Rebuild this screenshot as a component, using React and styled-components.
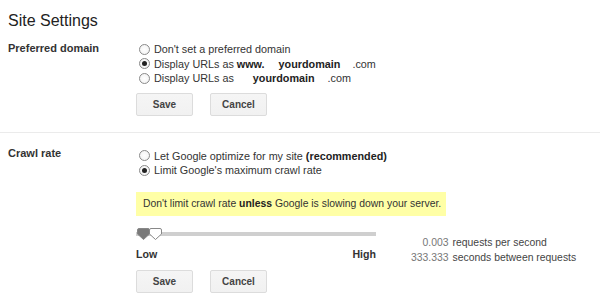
import React from 'react';
import styled, { createGlobalStyle } from 'styled-components';

const GlobalStyle = createGlobalStyle`
  html, body {
    margin: 0;
    padding: 0;
    background: #fff;
  }
  body {
    font-family: "Liberation Sans", Arial, sans-serif;
    color: #222;
  }
`;

const Page = styled.div`
  width: 600px;
  height: 304px;
  overflow: hidden;
  padding-top: 10px;
  box-sizing: border-box;
`;

const Title = styled.h1`
  margin: 0 0 0 8px;
  font-size: 16px;
  font-weight: normal;
  line-height: 22px;
  color: #222;
`;

const Section = styled.div`
  display: grid;
  grid-template-columns: 128px 1fr;
  padding: ${p => p.$pad || '9px 0 16px 8px'};
  border-bottom: ${p => (p.$divider ? '1px solid #ebebeb' : 'none')};
`;

const Label = styled.div`
  font-size: 11px;
  font-weight: bold;
  color: #333;
  line-height: 14px;
`;

const Options = styled.div`
  display: flex;
  flex-direction: column;
  padding-top: ${p => p.$top || 0}px;
`;

const Option = styled.label`
  display: flex;
  align-items: center;
  gap: 4px;
  font-size: 10.8px;
  line-height: 14.5px;
  color: #333;
  padding-left: 3px;
  white-space: nowrap;
`;

const Radio = styled.span`
  width: 11px;
  height: 11px;
  box-sizing: border-box;
  border-radius: 50%;
  border: 1px solid #8a8a8a;
  background: radial-gradient(circle, #fff 0, #f0f0f0 100%);
  display: inline-flex;
  align-items: center;
  justify-content: center;
  flex-shrink: 0;

  &::after {
    content: '';
    width: 5px;
    height: 5px;
    border-radius: 50%;
    background: ${p => (p.$checked ? '#222' : 'transparent')};
  }
`;

const Strong = styled.b`
  font-weight: bold;
  color: #222;
  margin-left: ${p => p.$ml || 0}px;
`;

const Plain = styled.span`
  margin-left: ${p => p.$ml || 0}px;
`;

const Buttons = styled.div`
  display: flex;
  gap: 17px;
  margin-top: ${p => p.$mt || 9}px;
`;

const Button = styled.button`
  width: 57px;
  height: 23px;
  border: 1px solid #dcdcdc;
  border-radius: 2px;
  background: linear-gradient(#f5f5f5, #f1f1f1);
  font-family: "Liberation Sans", Arial, sans-serif;
  font-size: 10px;
  font-weight: bold;
  color: #444;
  padding: 0;
`;

const Note = styled.div`
  width: 310px;
  height: 24px;
  line-height: 24px;
  box-sizing: border-box;
  margin-top: 14px;
  background: #ffffa6;
  font-size: 10.4px;
  color: #333;
  padding-left: 7px;
  white-space: nowrap;
`;

const SliderRow = styled.div`
  display: flex;
  align-items: flex-end;
  margin-top: 10px;
`;

const SliderCol = styled.div`
  width: 240px;
  display: flex;
  flex-direction: column;
`;

const Track = styled.div`
  position: relative;
  height: 16px;

  &::before {
    content: '';
    position: absolute;
    left: 0;
    right: 0;
    top: 6px;
    height: 4px;
    background: #cfcfcf;
  }
`;

const Thumb = styled.svg`
  position: absolute;
  top: 1px;
  left: ${p => p.$left}px;
`;

const Ends = styled.div`
  display: flex;
  justify-content: space-between;
  font-size: 10.6px;
  font-weight: bold;
  color: #333;
  margin-top: 5px;
  line-height: 14px;
`;

const Rates = styled.div`
  margin-left: 35px;
  margin-bottom: -4px;
  display: grid;
  grid-template-columns: auto auto;
  column-gap: 4px;
  font-size: 10.4px;
  line-height: 15px;
  color: #444;
`;

const Num = styled.span`
  text-align: right;
  color: #777;
`;

const ThumbShape = ({ left, fill }) => (
  <Thumb $left={left} width="15" height="14" viewBox="0 0 15 14">
    <path
      d="M3 1.5 H12 Q13.5 1.5 13.5 3 V7 L7.5 12.5 L1.5 7 V3 Q1.5 1.5 3 1.5 Z"
      fill={fill}
      stroke="#888"
      strokeWidth="1"
    />
  </Thumb>
);

export default function App() {
  return (
    <Page>
      <GlobalStyle />
      <Title>Site Settings</Title>

      <Section $divider>
        <Label>Preferred domain</Label>
        <div>
          <Options $top={1}>
            <Option>
              <Radio />
              <span>Don't set a preferred domain</span>
            </Option>
            <Option>
              <Radio $checked />
              <span>
                Display URLs as <Strong>www.</Strong>
                <Strong $ml={14}>yourdomain</Strong>
                <Plain $ml={12}>.com</Plain>
              </span>
            </Option>
            <Option>
              <Radio />
              <span>
                Display URLs as<Strong $ml={19}>yourdomain</Strong>
                <Plain $ml={13}>.com</Plain>
              </span>
            </Option>
          </Options>
          <Buttons $mt={7}>
            <Button>Save</Button>
            <Button>Cancel</Button>
          </Buttons>
        </div>
      </Section>

      <Section $pad="13px 0 0 8px">
        <Label>Crawl rate</Label>
        <div>
          <Options $top={3}>
            <Option>
              <Radio />
              <span>
                Let Google optimize for my site <Strong>(recommended)</Strong>
              </span>
            </Option>
            <Option>
              <Radio $checked />
              <span>Limit Google's maximum crawl rate</span>
            </Option>
          </Options>
          <Note>
            Don't limit crawl rate <Strong>unless</Strong> Google is slowing down your server.
          </Note>
          <SliderRow>
            <SliderCol>
              <Track>
                <ThumbShape left={0} fill="#7a7a7a" />
                <ThumbShape left={12} fill="#ffffff" />
              </Track>
              <Ends>
                <span>Low</span>
                <span>High</span>
              </Ends>
            </SliderCol>
            <Rates>
              <Num>0.003</Num>
              <span>requests per second</span>
              <Num>333.333</Num>
              <span>seconds between requests</span>
            </Rates>
          </SliderRow>
          <Buttons $mt={9}>
            <Button>Save</Button>
            <Button>Cancel</Button>
          </Buttons>
        </div>
      </Section>
    </Page>
  );
}
